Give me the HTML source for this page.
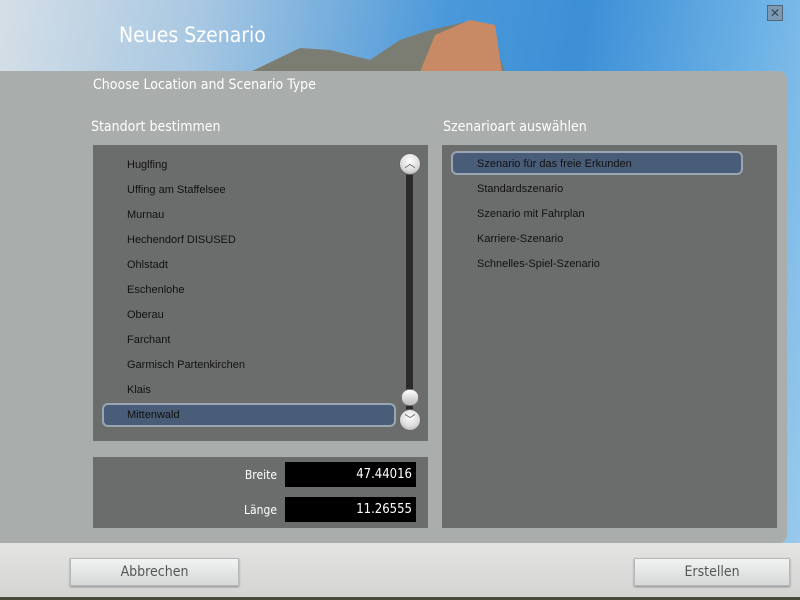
<!DOCTYPE html>
<html><head><style>
*{margin:0;padding:0;box-sizing:border-box}
body{width:800px;height:600px;overflow:hidden;position:relative;font-family:"Liberation Sans",sans-serif;background:linear-gradient(100deg,#d5dfe7 0%,#a9c8e2 22%,#4a98d9 50%,#3d8fd6 65%,#6fb3e6 85%,#9ccbec 100%)}
.abs{position:absolute}
.t{font-family:"DejaVu Sans Condensed","Liberation Sans Narrow","Liberation Sans",sans-serif;color:#fff}
.item{position:absolute;left:127px;font-size:11px;color:#111}
.item2{position:absolute;left:477px;font-size:11px;color:#111}
.sel{position:absolute;background:#4a5d78;border:2px solid #9aa6b2;border-radius:6px}
.btn{position:absolute;background:linear-gradient(#f2f3f3,#d6d9d9);border:1px solid #b5b9b9;box-shadow:0 1px 2px #888;font-family:"DejaVu Sans Condensed","Liberation Sans",sans-serif;font-size:14px;color:#555;text-align:center;line-height:27px}
.circ{position:absolute;width:22px;height:22px;border-radius:50%;background:radial-gradient(circle at 50% 35%,#fff,#d9d9d9 60%,#9a9a9a);border:1px solid #666;font-size:11px;color:#555;text-align:center;line-height:20px}
</style></head><body>
<svg class="abs" style="left:0;top:0" width="800" height="75">
<polygon points="250,72 300,48 330,50 370,60 400,40 430,30 465,22 490,30 505,72" fill="#7c7d72"/>
<polygon points="420,72 435,35 470,20 495,25 502,72" fill="#c88a64"/>
</svg>
<div class="abs" style="left:767px;top:5px;width:16px;height:16px;border:1px solid #567;background:#7d9ab5;font-size:12px;line-height:14px;text-align:center;color:#345">✕</div>
<div class="abs t" style="left:119px;top:23px;font-size:21px">Neues Szenario</div>
<div class="abs" style="left:0;top:71px;width:787px;height:472px;background:#a9adab;border-radius:0 8px 8px 0"></div>
<div class="abs t" style="left:93px;top:77px;font-size:14px">Choose Location and Scenario Type</div>
<div class="abs t" style="left:91px;top:119px;font-size:14px">Standort bestimmen</div>
<div class="abs t" style="left:443px;top:119px;font-size:14px">Szenarioart auswählen</div>
<div class="abs" style="left:93px;top:145px;width:335px;height:296px;background:#6b6d6c"></div>
<div class="abs" style="left:93px;top:457px;width:335px;height:71px;background:#6b6d6c"></div>
<div class="abs" style="left:442px;top:145px;width:335px;height:383px;background:#6b6d6c"></div>
<div class="sel" style="left:102px;top:403px;width:294px;height:24px"></div>
<div class="sel" style="left:451px;top:151px;width:292px;height:24px"></div>
<div class="item" style="top:159px">Huglfing</div>
<div class="item" style="top:184px">Uffing am Staffelsee</div>
<div class="item" style="top:209px">Murnau</div>
<div class="item" style="top:234px">Hechendorf DISUSED</div>
<div class="item" style="top:259px">Ohlstadt</div>
<div class="item" style="top:284px">Eschenlohe</div>
<div class="item" style="top:309px">Oberau</div>
<div class="item" style="top:334px">Farchant</div>
<div class="item" style="top:359px">Garmisch Partenkirchen</div>
<div class="item" style="top:384px">Klais</div>
<div class="item" style="top:409px">Mittenwald</div>
<div class="item2" style="top:158px">Szenario für das freie Erkunden</div>
<div class="item2" style="top:183px">Standardszenario</div>
<div class="item2" style="top:208px">Szenario mit Fahrplan</div>
<div class="item2" style="top:233px">Karriere-Szenario</div>
<div class="item2" style="top:258px">Schnelles-Spiel-Szenario</div>
<div class="abs" style="left:406px;top:165px;width:7px;height:250px;background:#2a2a2a"></div>
<div class="circ" style="left:399px;top:153px">︿</div>
<div class="abs" style="left:401px;top:389px;width:18px;height:17px;border-radius:8px;background:linear-gradient(#fff,#bbb);border:1px solid #777"></div>
<div class="circ" style="left:399px;top:409px">﹀</div>
<div class="abs t" style="left:200px;top:468px;width:77px;text-align:right;font-size:12px">Breite</div>
<div class="abs t" style="left:200px;top:503px;width:77px;text-align:right;font-size:12px">Länge</div>
<div class="abs t" style="left:285px;top:462px;width:131px;height:25px;background:#000;text-align:right;padding:5px 4px;font-size:13px">47.44016</div>
<div class="abs t" style="left:285px;top:497px;width:131px;height:25px;background:#000;text-align:right;padding:5px 4px;font-size:13px">11.26555</div>
<div class="abs" style="left:0;top:543px;width:800px;height:54px;background:linear-gradient(#e4e4e2,#d4d4d2)"></div>
<div class="abs" style="left:0;top:597px;width:800px;height:3px;background:#4a4a3a"></div>
<div class="btn" style="left:70px;top:558px;width:169px;height:28px">Abbrechen</div>
<div class="btn" style="left:634px;top:558px;width:156px;height:28px">Erstellen</div>
</body></html>
